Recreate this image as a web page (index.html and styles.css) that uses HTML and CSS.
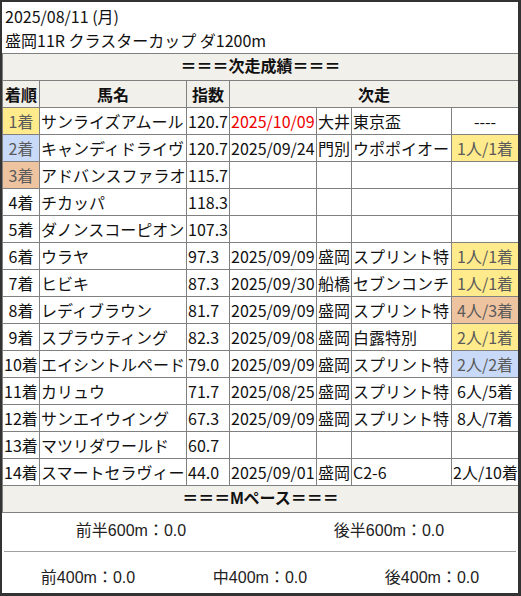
FILE: index.html
```html
<!DOCTYPE html>
<html lang="ja">
<head>
<meta charset="utf-8">
<title>次走成績</title>
<link rel="stylesheet" href="styles.css">
</head>
<body>
<div class="frame">
  <div class="head">
    <div>2025/08/11 (月)</div>
    <div>盛岡11R クラスターカップ ダ1200m</div>
  </div>
  <table class="res">
    <colgroup>
      <col class="w-rank"><col class="w-name"><col class="w-idx"><col class="w-date"><col class="w-venue"><col class="w-race"><col class="w-result">
    </colgroup>
    <tr class="sec"><th colspan="7">＝＝＝次走成績＝＝＝</th></tr>
    <tr class="hdr"><th>着順</th><th>馬名</th><th>指数</th><th colspan="4">次走</th></tr>
    <tr><td class="rank gold">1着</td><td>サンライズアムール</td><td>120.7</td><td class="red">2025/10/09</td><td>大井</td><td>東京盃</td><td class="ctr">----</td></tr>
    <tr><td class="rank blue">2着</td><td>キャンディドライヴ</td><td>120.7</td><td>2025/09/24</td><td>門別</td><td>ウポポイオー</td><td class="ctr gold">1人/1着</td></tr>
    <tr><td class="rank tan">3着</td><td>アドバンスファラオ</td><td>115.7</td><td></td><td></td><td></td><td></td></tr>
    <tr><td class="rank">4着</td><td>チカッパ</td><td>118.3</td><td></td><td></td><td></td><td></td></tr>
    <tr><td class="rank">5着</td><td>ダノンスコーピオン</td><td>107.3</td><td></td><td></td><td></td><td></td></tr>
    <tr><td class="rank">6着</td><td>ウラヤ</td><td>97.3</td><td>2025/09/09</td><td>盛岡</td><td>スプリント特</td><td class="ctr gold">1人/1着</td></tr>
    <tr><td class="rank">7着</td><td>ヒビキ</td><td>87.3</td><td>2025/09/30</td><td>船橋</td><td>セブンコンチ</td><td class="ctr gold">1人/1着</td></tr>
    <tr><td class="rank">8着</td><td>レディブラウン</td><td>81.7</td><td>2025/09/09</td><td>盛岡</td><td>スプリント特</td><td class="ctr tan">4人/3着</td></tr>
    <tr><td class="rank">9着</td><td>スプラウティング</td><td>82.3</td><td>2025/09/08</td><td>盛岡</td><td>白露特別</td><td class="ctr gold">2人/1着</td></tr>
    <tr><td class="rank">10着</td><td>エイシントルペード</td><td>79.0</td><td>2025/09/09</td><td>盛岡</td><td>スプリント特</td><td class="ctr blue">2人/2着</td></tr>
    <tr><td class="rank">11着</td><td>カリュウ</td><td>71.7</td><td>2025/08/25</td><td>盛岡</td><td>スプリント特</td><td class="ctr">6人/5着</td></tr>
    <tr><td class="rank">12着</td><td>サンエイウイング</td><td>67.3</td><td>2025/09/09</td><td>盛岡</td><td>スプリント特</td><td class="ctr">8人/7着</td></tr>
    <tr><td class="rank">13着</td><td>マツリダワールド</td><td>60.7</td><td></td><td></td><td></td><td></td></tr>
    <tr><td class="rank">14着</td><td>スマートセラヴィー</td><td>44.0</td><td>2025/09/01</td><td>盛岡</td><td>C2-6</td><td class="ctr">2人/10着</td></tr>
    <tr class="sec"><th colspan="7">＝＝＝Mペース＝＝＝</th></tr>
  </table>
  <div class="pace">
    <div class="prow two"><span>前半600m：0.0</span><span>後半600m：0.0</span></div>
    <div class="rule"></div>
    <div class="prow three"><span>前400m：0.0</span><span>中400m：0.0</span><span>後400m：0.0</span></div>
  </div>
</div>
</body>
</html>
```

FILE: styles.css
```css
* { box-sizing: border-box; }
html, body { margin: 0; padding: 0; background: #ffffff; }
body { width: 521px; height: 596px; overflow: hidden; }

.frame {
  width: 521px;
  height: 596px;
  border-style: solid;
  border-color: #333333;
  border-width: 2px 3px 3px 2px;
  background: #ffffff;
  font-family: "Noto Sans CJK JP", sans-serif;
  font-size: 16px;
  color: #111111;
  overflow: hidden;
}

.head {
  height: 51px;
  padding: 2px 3px 0;
  line-height: 24px;
  white-space: nowrap;
}

.res {
  border-collapse: collapse;
  table-layout: fixed;
  width: 516px;
}
.w-rank { width: 37px; }
.w-name { width: 147px; }
.w-idx { width: 43px; }
.w-date { width: 87px; }
.w-venue { width: 35px; }
.w-race { width: 100px; }
.w-result { width: 67px; }

.res td, .res th {
  border: 1px solid #808080;
  padding: 0 1px;
  line-height: 26px;
  height: 27px;
  white-space: nowrap;
  overflow: hidden;
  text-align: left;
  font-weight: 400;
}
.res .sec th {
  background: #f2f0eb;
  text-align: center;
  font-weight: 700;
  font-family: "Liberation Sans", "Noto Sans CJK JP", sans-serif;
}
.res .hdr th {
  background: #f2f0eb;
  text-align: center;
  font-weight: 700;
}
.res td.rank, .res td.ctr { text-align: center; }
.res td.red { color: #ee0000; }
.res td.gold { background: #ffea8c; color: #5a5a5a; }
.res td.blue { background: #c9daf8; color: #5a5a5a; }
.res td.tan { background: #eec39f; color: #5a5a5a; }

.pace {
  font-family: "Liberation Sans", "Noto Sans CJK JP", sans-serif;
  font-size: 16px;
  color: #222222;
}
.prow {
  display: grid;
  text-align: center;
  line-height: 24px;
  white-space: nowrap;
}
.prow.two {
  grid-template-columns: 1fr 1fr;
  height: 38px;
  padding-top: 6px;
}
.prow.three {
  grid-template-columns: 1fr 1fr 1fr;
  padding-top: 14px;
}
.rule {
  height: 1px;
  margin: 0 2px;
  background: #a0a0a0;
}
```
